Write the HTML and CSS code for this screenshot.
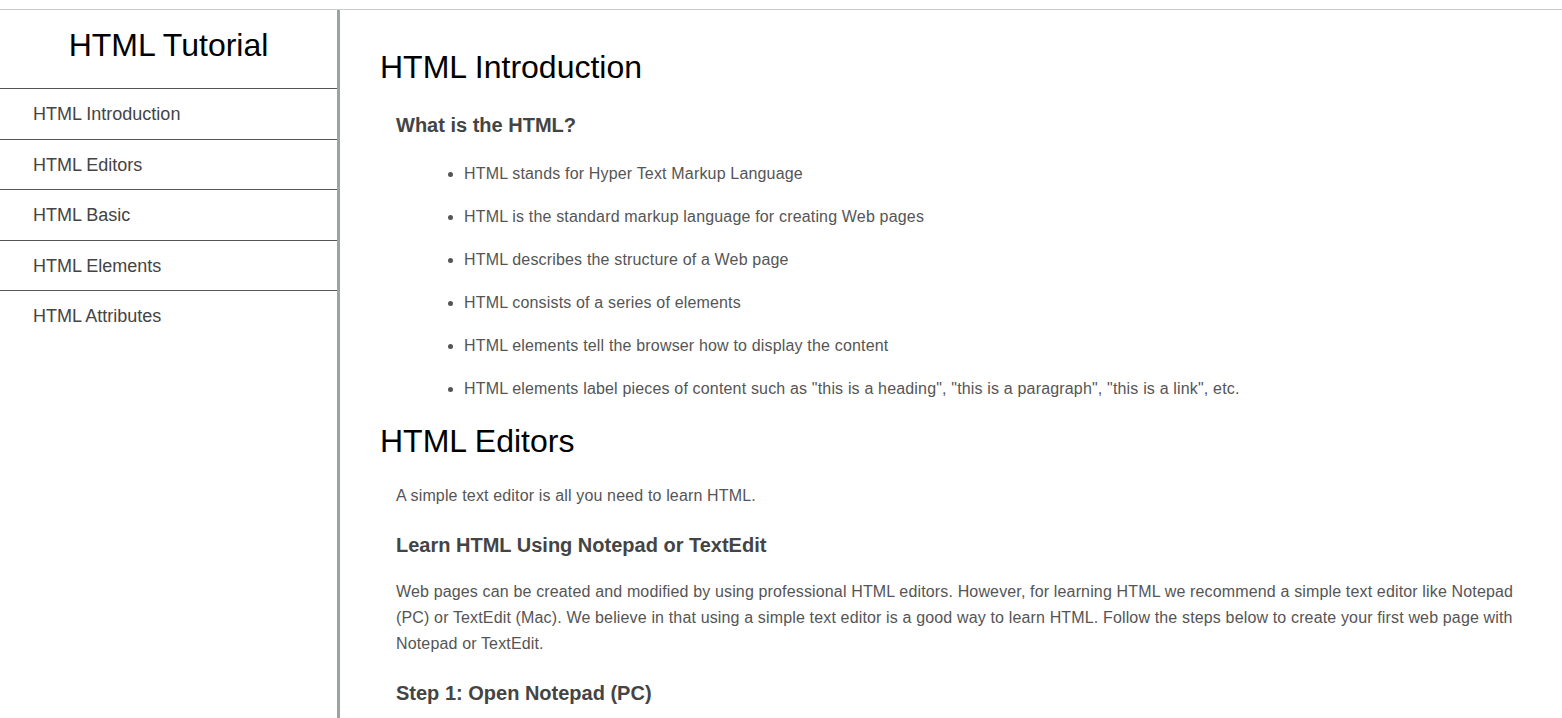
FILE: index.html
```html
<!DOCTYPE html>
<html lang="en">
<head>
<meta charset="utf-8">
<title>HTML Tutorial</title>
<link rel="stylesheet" href="styles.css">
</head>
<body>
<div class="page">
  <aside class="sidebar">
    <div class="sidebar-title">HTML Tutorial</div>
    <nav class="nav">
      <a class="nav-item" href="#intro">HTML Introduction</a>
      <a class="nav-item" href="#editors">HTML Editors</a>
      <a class="nav-item" href="#basic">HTML Basic</a>
      <a class="nav-item" href="#elements">HTML Elements</a>
      <a class="nav-item" href="#attributes">HTML Attributes</a>
    </nav>
  </aside>
  <main class="main">
    <section class="section" id="intro">
      <h1 class="section-title">HTML Introduction</h1>
      <div class="section-body">
        <h3 class="sub-title lead">What is the HTML?</h3>
        <ul class="list">
          <li>HTML stands for Hyper Text Markup Language</li>
          <li>HTML is the standard markup language for creating Web pages</li>
          <li>HTML describes the structure of a Web page</li>
          <li>HTML consists of a series of elements</li>
          <li>HTML elements tell the browser how to display the content</li>
          <li>HTML elements label pieces of content such as "this is a heading", "this is a paragraph", "this is a link", etc.</li>
        </ul>
      </div>
    </section>
    <section class="section" id="editors">
      <h1 class="section-title">HTML Editors</h1>
      <div class="section-body">
        <p class="text">A simple text editor is all you need to learn HTML.</p>
        <h3 class="sub-title">Learn HTML Using Notepad or TextEdit</h3>
        <p class="text">Web pages can be created and modified by using professional HTML editors. However, for learning HTML we recommend a simple text editor like Notepad (PC) or TextEdit (Mac). We believe in that using a simple text editor is a good way to learn HTML. Follow the steps below to create your first web page with Notepad or TextEdit.</p>
        <h3 class="sub-title">Step 1: Open Notepad (PC)</h3>
      </div>
    </section>
  </main>
</div>
</body>
</html>
```

FILE: styles.css
```css
html, body {
  margin: 0;
  padding: 0;
  background: #fff;
}

body {
  font-family: "Liberation Sans", Arial, sans-serif;
  padding-top: 9px;
}

.page {
  display: flex;
  border-top: 1px solid #cccccc;
  min-height: calc(100vh - 10px);
}

.sidebar {
  flex: 0 0 337px;
  width: 337px;
  border-right: 3px solid #9ba3a5;
}

.sidebar-title {
  font-size: 32px;
  line-height: 36px;
  color: #000;
  text-align: center;
  padding: 17px 0 25px;
}

.nav {
  display: flex;
  flex-direction: column;
}

.nav-item {
  display: block;
  border-top: 1px solid #555;
  padding: 15px 0 13px 33px;
  font-size: 18px;
  line-height: 21.5px;
  color: #444;
  text-decoration: none;
}

.main {
  flex: 1;
  padding: 18px 40px 0 40px;
  min-width: 0;
}

.section-title {
  font-size: 32px;
  line-height: 36px;
  font-weight: normal;
  color: #000;
  margin: 21px 0 24px;
}

.section-body {
  padding-left: 16px;
}

.sub-title {
  font-size: 20px;
  line-height: 23px;
  font-weight: bold;
  color: #444;
  margin: 25px 0 22px;
}

.sub-title.lead {
  margin-top: 29px;
}

.list {
  margin: 24px 0 21px;
  padding-left: 68px;
  color: #555;
  font-size: 16px;
  letter-spacing: 0.17px;
}

.list li {
  line-height: 26px;
  margin-bottom: 17px;
}

.list li:last-child {
  margin-bottom: 0;
}

.text {
  margin: 22px 0;
  font-size: 16px;
  line-height: 26px;
  color: #555;
  letter-spacing: 0.15px;
}
```
